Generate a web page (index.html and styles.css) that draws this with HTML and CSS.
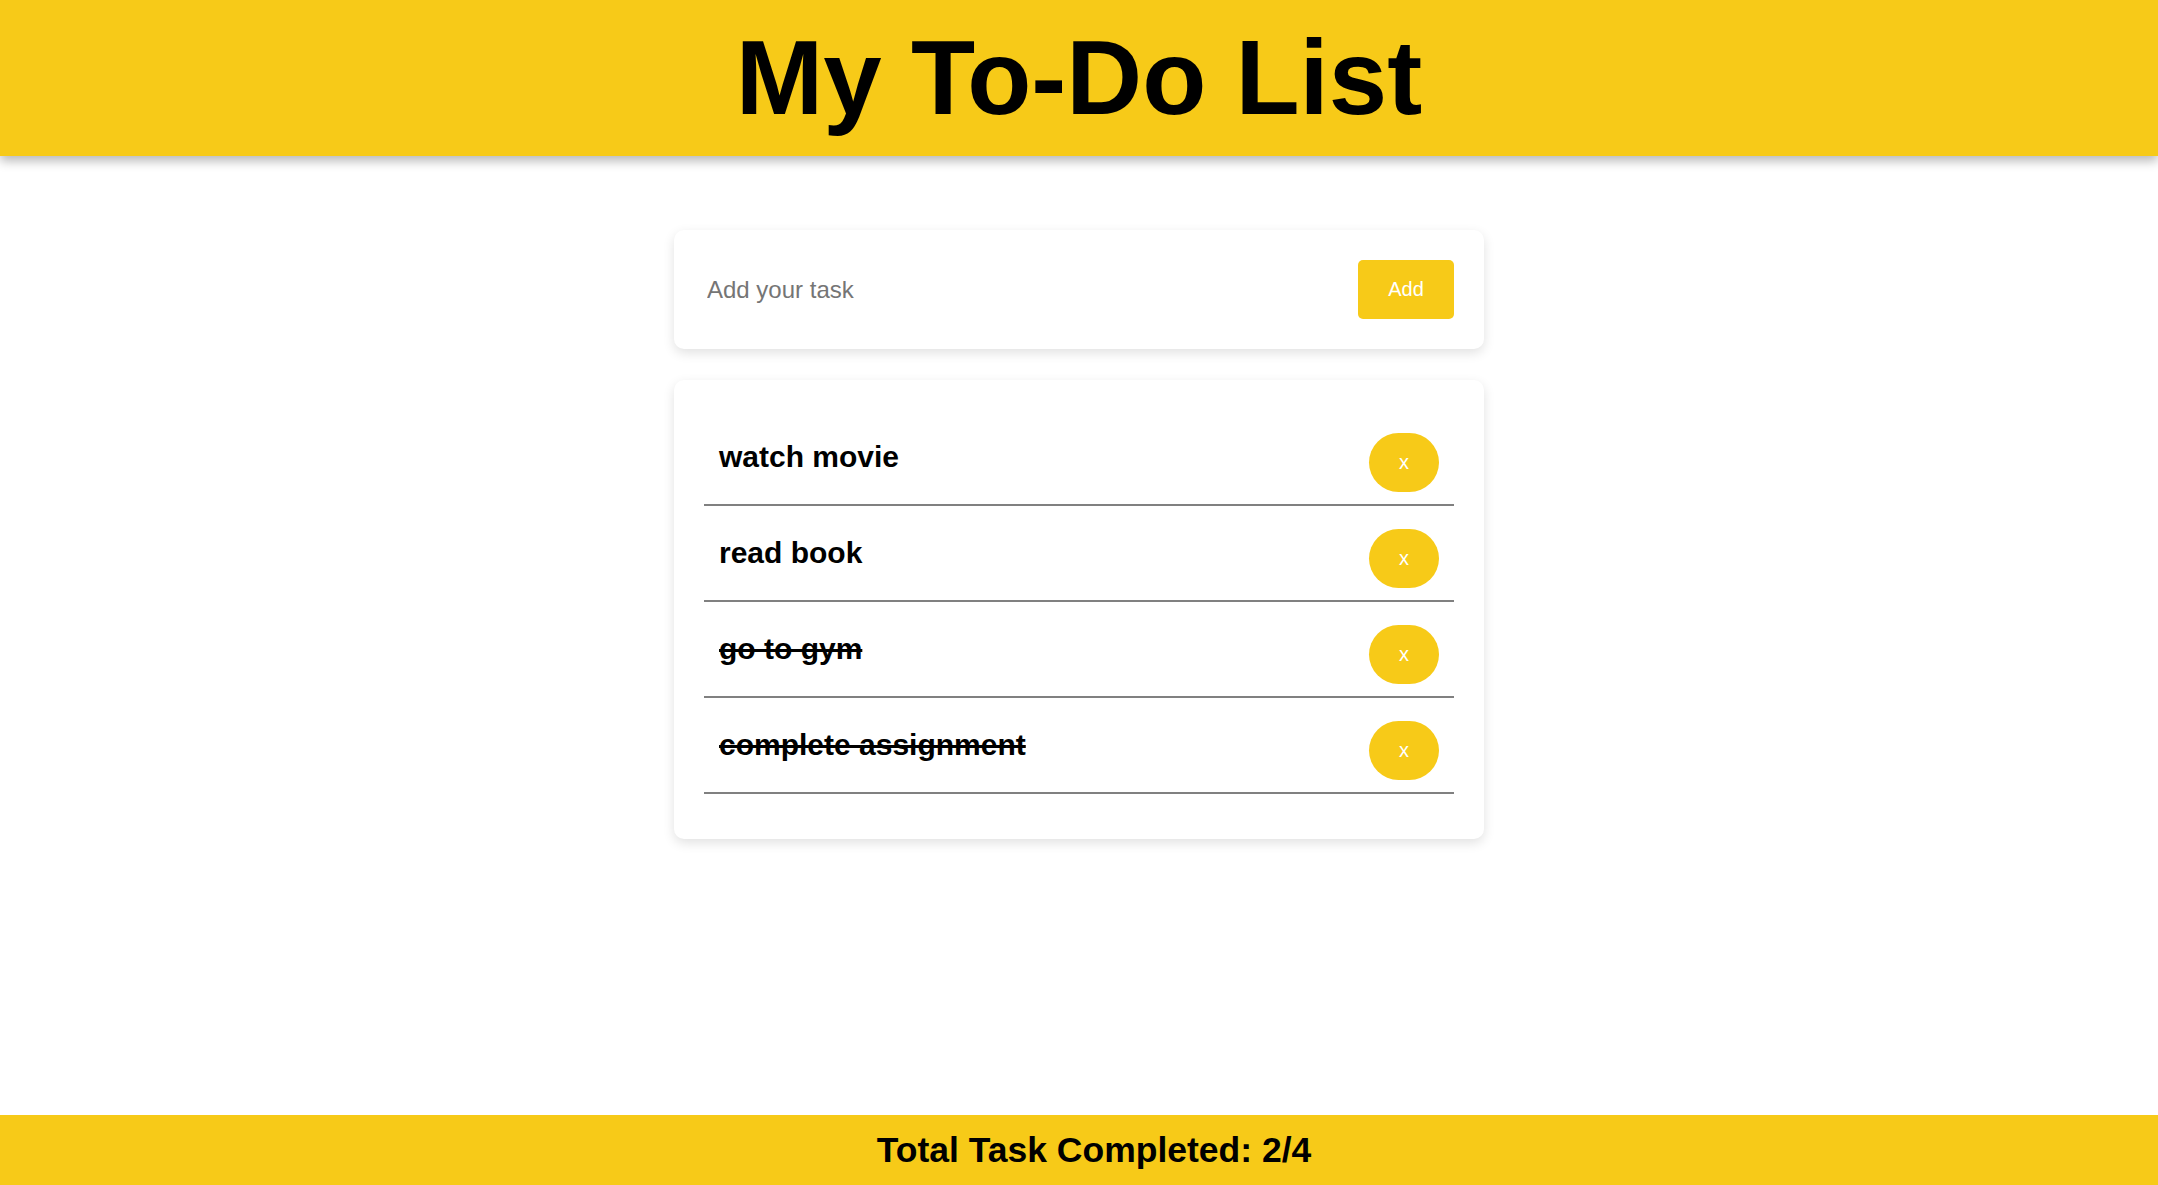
FILE: index.html
```html
<!DOCTYPE html>
<html lang="en">
<head>
<meta charset="utf-8">
<title>My To-Do List</title>
<link rel="stylesheet" href="styles.css">
</head>
<body>
<header class="topbar">
  <h1 class="title">My To-Do List</h1>
</header>
<main class="main">
  <section class="card add-card">
    <input class="task-input" type="text" placeholder="Add your task">
    <button class="add-btn">Add</button>
  </section>
  <section class="card list-card">
    <ul class="task-list">
      <li class="task"><span class="task-text">watch movie</span><button class="del-btn">x</button></li>
      <li class="task"><span class="task-text">read book</span><button class="del-btn">x</button></li>
      <li class="task"><span class="task-text done">go to gym</span><button class="del-btn">x</button></li>
      <li class="task"><span class="task-text done">complete assignment</span><button class="del-btn">x</button></li>
    </ul>
  </section>
</main>
<footer class="footer">
  <p class="footer-text">Total Task Completed: 2/4</p>
</footer>
</body>
</html>
```

FILE: styles.css
```css
* { box-sizing: border-box; }

html, body { height: 100%; }

body {
  margin: 0;
  font-family: "Liberation Sans", Arial, sans-serif;
  background: #ffffff;
  color: #000;
  display: flex;
  flex-direction: column;
  min-height: 1185px;
}

.topbar {
  height: 156px;
  background: #f7ca18;
  display: flex;
  align-items: center;
  justify-content: center;
  box-shadow: 0 5px 10px rgba(0, 0, 0, 0.28);
  position: relative;
  z-index: 1;
}

.title {
  margin: 0;
  font-size: 105px;
  font-weight: bold;
  line-height: normal;
}

.main {
  flex: 1;
  display: flex;
  flex-direction: column;
  align-items: center;
  padding-top: 74px;
  gap: 31px;
}

.card {
  width: 810px;
  background: #fff;
  border-radius: 10px;
  box-shadow: 0 4px 12px rgba(0, 0, 0, 0.12);
  padding: 30px;
}

.add-card {
  display: flex;
  align-items: center;
  height: 119px;
}

.task-input {
  flex: 1;
  border: none;
  outline: none;
  font-family: "Liberation Sans", Arial, sans-serif;
  font-size: 24px;
  padding: 0 3px;
  color: #000;
  background: transparent;
}

.task-input::placeholder { color: #757575; }

.add-btn {
  width: 96px;
  height: 59px;
  border: none;
  border-radius: 5px;
  background: #f7ca18;
  color: #fff;
  font-family: "Liberation Sans", Arial, sans-serif;
  font-size: 20px;
}

.list-card { padding-bottom: 45px; }

.task-list {
  list-style: none;
  margin: 0;
  padding: 0;
}

.task {
  display: flex;
  align-items: flex-start;
  justify-content: space-between;
  padding: 23px 15px 12px 15px;
  border-bottom: 2px solid #808080;
}

.task-text {
  margin-top: 7px;
  font-size: 30px;
  font-weight: bold;
  line-height: normal;
}

.task-text.done { text-decoration: line-through; }

.del-btn {
  width: 70px;
  height: 59px;
  border: none;
  border-radius: 30px;
  background: #f7ca18;
  color: #fff;
  font-family: "Liberation Sans", Arial, sans-serif;
  font-size: 20px;
}

.footer {
  height: 70px;
  background: #f7ca18;
  display: flex;
  align-items: center;
  justify-content: center;
  padding-left: 30px;
}

.footer-text {
  margin: 0;
  font-size: 35.5px;
  font-weight: bold;
}
```
